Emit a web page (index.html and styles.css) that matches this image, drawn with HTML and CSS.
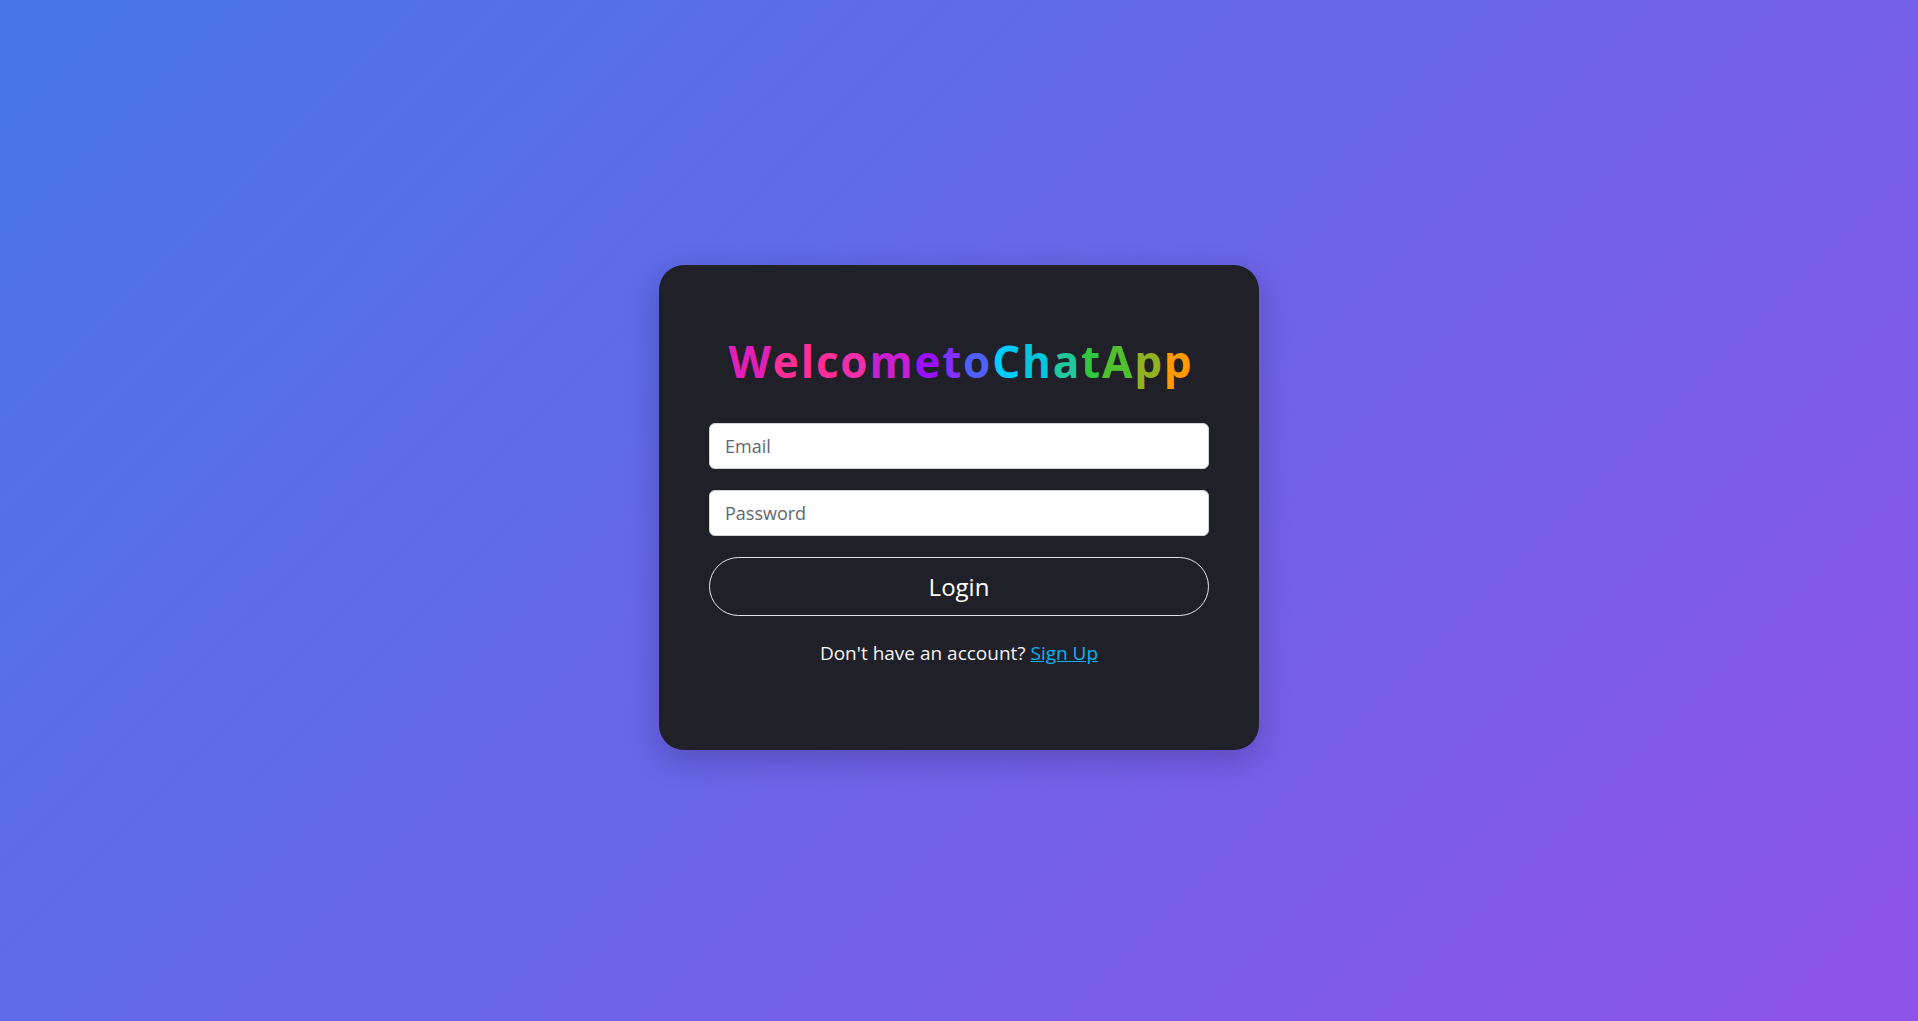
FILE: index.html
```html
<!DOCTYPE html>
<html lang="en">
<head>
<meta charset="utf-8">
<title>ChatApp Login</title>
<link rel="stylesheet" href="styles.css">
</head>
<body>
<main class="page">
  <section class="card">
    <h1 class="title"><span class="c1">W</span><span class="c2">e</span><span class="c3">l</span><span class="c4">c</span><span class="c5">o</span><span class="c6">m</span><span class="c7">e</span><span class="c8">t</span><span class="c9">o</span><span class="c10">C</span><span class="c11">h</span><span class="c12">a</span><span class="c13">t</span><span class="c14">A</span><span class="c15">p</span><span class="c16">p</span></h1>
    <form class="form">
      <input class="field" type="email" placeholder="Email">
      <input class="field" type="password" placeholder="Password">
      <button class="btn" type="button">Login</button>
    </form>
    <p class="foot">Don't have an account? <a class="link" href="#">Sign Up</a></p>
  </section>
</main>
</body>
</html>
```

FILE: styles.css
```css
* { box-sizing: border-box; }
html, body { margin: 0; padding: 0; }
body {
  font-family: "Open Sans", "Noto Sans", sans-serif;
  background: linear-gradient(135deg, #4776e6 0%, #8e54e9 100%);
  min-height: 100vh;
}
.page {
  min-height: 100vh;
  padding-bottom: 6px;
  display: flex;
  align-items: center;
  justify-content: center;
}
.card {
  width: 600px;
  background: #202028;
  border-radius: 25px;
  padding: 50px 50px 50px;
  box-shadow: 0 10px 30px rgba(20, 10, 60, 0.25);
  text-align: center;
  color: #f2f2f2;
}
.title {
  margin: 20px 0 35px;
  padding-left: 4px;
  font-size: 44px;
  line-height: 1.2;
  font-weight: 700;
  letter-spacing: 1.8px;
}
.c1 { color: #e020b8; }
.c2 { color: #ff2d96; }
.c3 { color: #ff2d96; }
.c4 { color: #ff2d99; }
.c5 { color: #f030a8; }
.c6 { color: #c820d0; }
.c7 { color: #9a10ff; }
.c8 { color: #8030ff; }
.c9 { color: #5060ff; }
.c10 { color: #00ccff; }
.c11 { color: #00c6dc; }
.c12 { color: #20c89c; }
.c13 { color: #30c840; }
.c14 { color: #50c030; }
.c15 { color: #92b220; }
.c16 { color: #ff9a00; }
.form {
  display: flex;
  flex-direction: column;
  gap: 21px;
  margin: 0;
}
.field {
  width: 100%;
  height: 46px;
  padding: 0 15px;
  font-family: inherit;
  font-size: 18px;
  color: #212529;
  background: #fff;
  border: 1px solid #ced4da;
  border-radius: 6px;
  outline: none;
}
.field::placeholder { color: #5f6670; }
.btn {
  width: 100%;
  height: 59px;
  background: transparent;
  color: #fff;
  border: 1px solid #e4e4e8;
  border-radius: 30px;
  font-family: inherit;
  font-size: 24px;
  cursor: pointer;
}
.foot {
  margin: 23px 0 32px;
  font-size: 19px;
  line-height: 1.5;
}
.link {
  color: #0db2f5;
  text-decoration: underline;
}
```
